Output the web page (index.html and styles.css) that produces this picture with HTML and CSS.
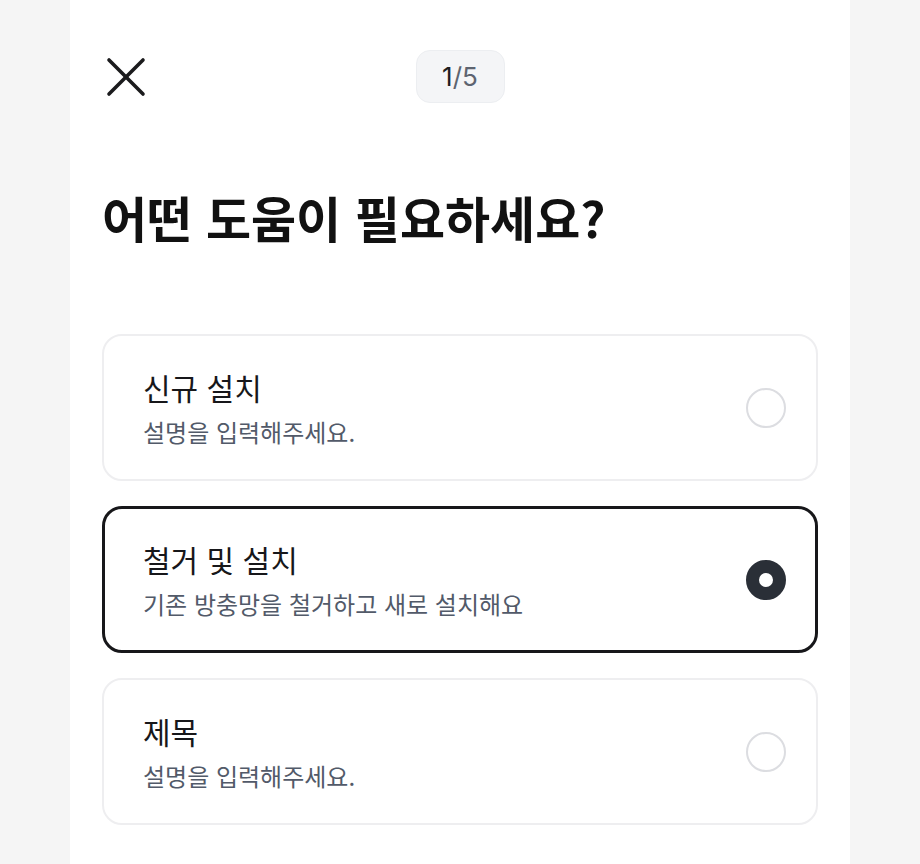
FILE: index.html
```html
<!DOCTYPE html>
<html lang="ko">
<head>
<meta charset="utf-8">
<title>어떤 도움이 필요하세요?</title>
<link rel="stylesheet" href="styles.css">
</head>
<body>
<div class="page">
  <header class="header">
    <button class="close" aria-label="닫기">
      <svg width="48" height="48" viewBox="0 0 48 48" fill="none" stroke="#1b1b1d" stroke-width="3.6" stroke-linecap="round">
        <line x1="7" y1="7" x2="41" y2="41"/>
        <line x1="41" y1="7" x2="7" y2="41"/>
      </svg>
    </button>
    <div class="step"><span class="step-cur">1</span><span class="step-total">/5</span></div>
    <div class="spacer"></div>
  </header>

  <h1 class="title">어떤 도움이 필요하세요?</h1>

  <div class="options">
    <label class="option">
      <div class="option-text">
        <div class="option-title">신규 설치</div>
        <div class="option-desc">설명을 입력해주세요.</div>
      </div>
      <span class="radio"></span>
    </label>
    <label class="option selected">
      <div class="option-text">
        <div class="option-title">철거 및 설치</div>
        <div class="option-desc">기존 방충망을 철거하고 새로 설치해요</div>
      </div>
      <span class="radio"></span>
    </label>
    <label class="option">
      <div class="option-text">
        <div class="option-title">제목</div>
        <div class="option-desc">설명을 입력해주세요.</div>
      </div>
      <span class="radio"></span>
    </label>
  </div>
</div>
</body>
</html>
```

FILE: styles.css
```css
* { box-sizing: border-box; }

html, body {
  margin: 0;
  padding: 0;
  background: #f5f5f5;
  font-family: "Noto Sans CJK KR", "Noto Sans", sans-serif;
  color: #17171a;
}

.page {
  width: 780px;
  min-height: 864px;
  margin: 0 auto;
  background: #ffffff;
  padding: 50px 32px 0;
}

.header {
  display: grid;
  grid-template-columns: 48px 1fr 48px;
  align-items: center;
  height: 53px;
}

.close {
  width: 48px;
  height: 48px;
  padding: 0;
  border: 0;
  background: none;
  display: flex;
  align-items: center;
  justify-content: center;
}

.step {
  justify-self: center;
  width: 89px;
  height: 53px;
  border-radius: 14px;
  background: #f4f5f7;
  border: 1px solid #eceef1;
  display: flex;
  align-items: center;
  justify-content: center;
  font-family: "Inter", "Liberation Sans", sans-serif;
  font-size: 26px;
}

.step-cur { color: #1b1d21; }
.step-total { color: #5d6470; }

.title {
  margin: 82px 0 0;
  font-size: 49px;
  line-height: 64px;
  font-weight: 700;
  color: #111111;
}

.options {
  margin-top: 85px;
  display: flex;
  flex-direction: column;
  gap: 25px;
}

.option {
  display: flex;
  align-items: center;
  justify-content: space-between;
  height: 147px;
  border: 2px solid #eeeef0;
  border-radius: 20px;
  padding: 0 30px 0 39px;
}

.option.selected {
  border: 3px solid #17171a;
  padding: 0 29px 0 38px;
}

.option-text {
  display: flex;
  flex-direction: column;
  gap: 10px;
}

.option-title {
  font-size: 30px;
  line-height: 38px;
  color: #17171a;
}

.option-desc {
  font-size: 24px;
  line-height: 32px;
  color: #525a69;
}

.radio {
  width: 40px;
  height: 40px;
  border-radius: 50%;
  border: 2px solid #dcdde1;
  background: #fff;
}

.option.selected .radio {
  border: 13px solid #2a2f37;
}
```
